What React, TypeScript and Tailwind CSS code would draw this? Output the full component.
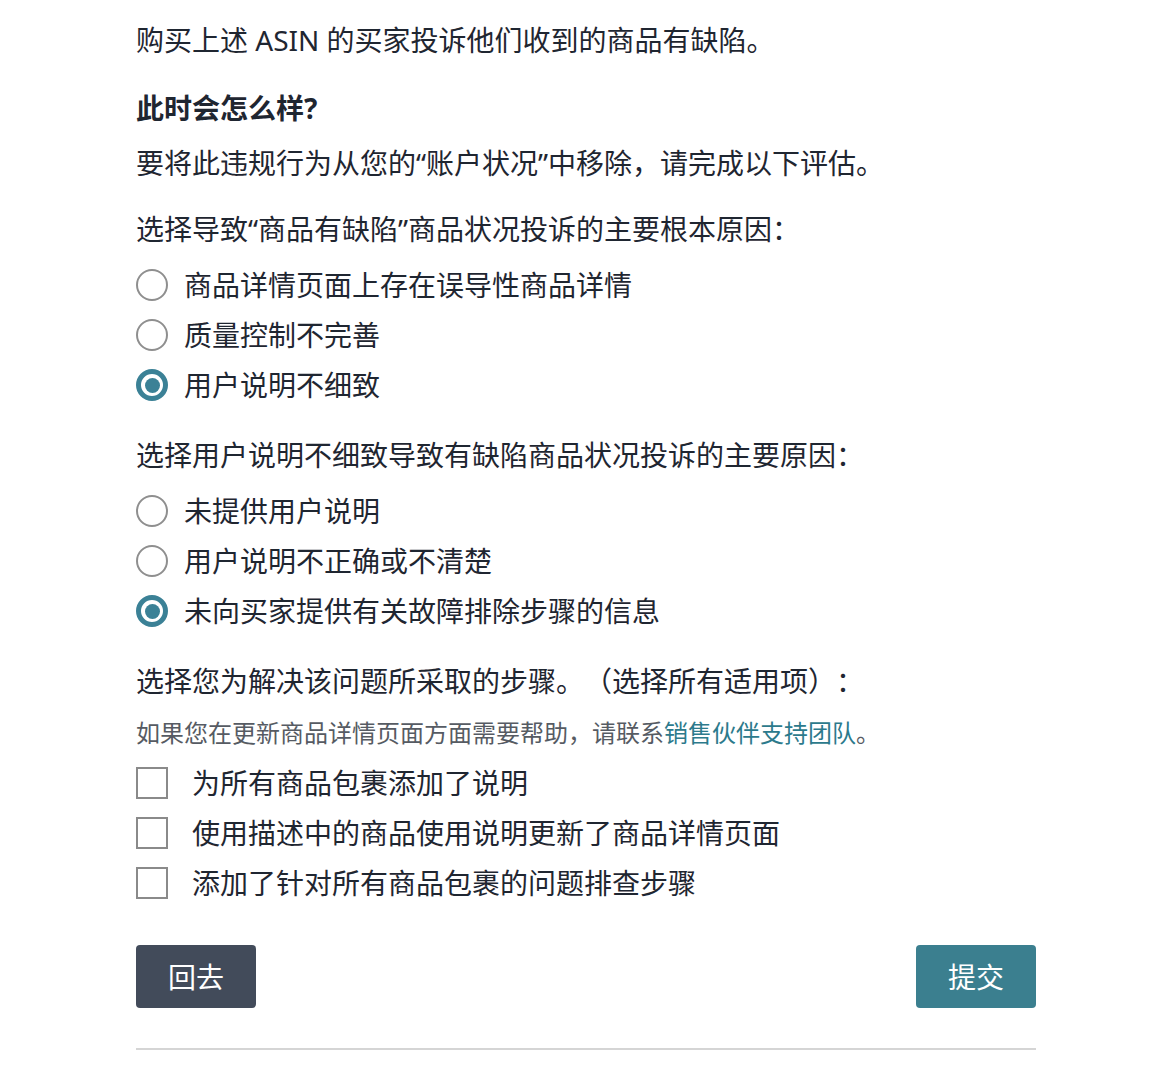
import { useState } from 'react';

const font = { fontFamily: '"Noto Sans", "Noto Sans CJK SC", sans-serif' };

const rootCauses = ['商品详情页面上存在误导性商品详情', '质量控制不完善', '用户说明不细致'];
const reasons = ['未提供用户说明', '用户说明不正确或不清楚', '未向买家提供有关故障排除步骤的信息'];
const steps = ['为所有商品包裹添加了说明', '使用描述中的商品使用说明更新了商品详情页面', '添加了针对所有商品包裹的问题排查步骤'];

const Radio = ({ label, checked, onClick }: { label: string; checked: boolean; onClick: () => void }) => (
  <button onClick={onClick} className="flex items-center gap-4 h-[50px] text-left">
    {checked ? (
      <span className="w-8 h-8 rounded-full border-[5px] border-[#3b8196] flex items-center justify-center">
        <span className="w-[15px] h-[15px] rounded-full bg-[#3b8196]" />
      </span>
    ) : (
      <span className="w-8 h-8 rounded-full border-2 border-[#8f8f8f] bg-white" />
    )}
    <span className="text-[28px] leading-none text-[#1f2631]">{label}</span>
  </button>
);

const Checkbox = ({ label, checked, onClick }: { label: string; checked: boolean; onClick: () => void }) => (
  <button onClick={onClick} className="flex items-center gap-6 h-[50px] text-left">
    <span className="w-8 h-8 border-2 border-[#8a8a8a] bg-white flex items-center justify-center text-[#3b8196] text-xl">
      {checked ? '✓' : ''}
    </span>
    <span className="text-[28px] leading-none text-[#1f2631]">{label}</span>
  </button>
);

export default function App() {
  const [cause, setCause] = useState(2);
  const [reason, setReason] = useState(2);
  const [checked, setChecked] = useState<boolean[]>([false, false, false]);

  return (
    <div className="min-h-screen bg-white [text-spacing-trim:space-all]" style={font}>
      <div className="w-[900px] ml-[136px] text-[#1f2631]">
        <p className="text-[28px] leading-none pt-[26px]">购买上述 ASIN 的买家投诉他们收到的商品有缺陷。</p>

        <h2 className="text-[28px] leading-none font-bold mt-[40px]">此时会怎么样?</h2>

        <p className="text-[28px] leading-none mt-[27px]">要将此违规行为从您的“账户状况”中移除，请完成以下评估。</p>

        <p className="text-[28px] leading-none mt-[38px]">选择导致“商品有缺陷”商品状况投诉的主要根本原因：</p>
        <div className="flex flex-col items-start mt-[17px]">
          {rootCauses.map((c, i) => (
            <Radio key={c} label={c} checked={cause === i} onClick={() => setCause(i)} />
          ))}
        </div>

        <p className="text-[28px] leading-none mt-[31px]">选择用户说明不细致导致有缺陷商品状况投诉的主要原因：</p>
        <div className="flex flex-col items-start mt-[17px]">
          {reasons.map((r, i) => (
            <Radio key={r} label={r} checked={reason === i} onClick={() => setReason(i)} />
          ))}
        </div>

        <p className="text-[28px] leading-none mt-[31px]">选择您为解决该问题所采取的步骤。（选择所有适用项）：</p>
        <p className="text-[24px] leading-none mt-[26px] text-[#565b63]">
          如果您在更新商品详情页面方面需要帮助，请联系<span className="text-[#2c7a8c]">销售伙伴支持团队</span>。
        </p>
        <div className="flex flex-col items-start mt-[13px]">
          {steps.map((s, i) => (
            <Checkbox
              key={s}
              label={s}
              checked={checked[i]}
              onClick={() => setChecked(checked.map((v, j) => (j === i ? !v : v)))}
            />
          ))}
        </div>

        <div className="flex justify-between mt-[37px]">
          <button className="w-[120px] h-[63px] rounded bg-[#424b5a] text-white text-[28px]">回去</button>
          <button className="w-[120px] h-[63px] rounded bg-[#3b7f8f] text-white text-[28px]">提交</button>
        </div>

        <hr className="mt-[40px] border-0 h-[2px] bg-[#d5d5d5]" />
      </div>
    </div>
  );
}
